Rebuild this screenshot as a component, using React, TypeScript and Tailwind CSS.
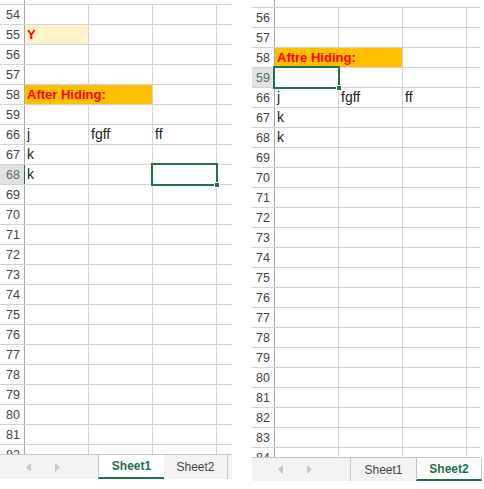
type Cell = { text?: string; fill?: string; bold?: boolean; red?: boolean; span?: number };

type SheetProps = {
  rows: number[];
  cells: Record<string, Cell>;
  selRow: number;
  selCol: number;
  topClass: string;
  gridClass: string;
  headClass: string;
  barClass: string;
  active: 1 | 2;
};

const cols = [0, 1, 2];

function Arrow({ dir }: { dir: "l" | "r" }) {
  return (
    <svg width="6" height="9" viewBox="0 0 6 9" aria-hidden>
      <polygon points={dir === "l" ? "5,0 5,9 0,4.5" : "1,0 1,9 6,4.5"} fill="#c8c8c8" />
    </svg>
  );
}

function Sheet({ rows, cells, selRow, selCol, topClass, gridClass, headClass, barClass, active }: SheetProps) {
  return (
    <div className="flex h-full flex-col">
      <div className={`${gridClass} flex flex-col overflow-hidden`}>
        <div className={`${topClass} flex shrink-0 border-b border-[#d4d4d4]`}>
          <div className={`${headClass} shrink-0 border-r border-[#a6a6a6]`} />
        </div>
        {rows.map((r) => {
          const isSel = r === selRow;
          return (
            <div key={r} className="flex h-[20px] shrink-0 border-b border-[#d4d4d4]">
              <div
                className={`${headClass} flex shrink-0 items-end justify-end border-r pb-[3px] pr-[4px] text-[12.5px] leading-none ${
                  isSel ? "border-[#217346] bg-[#e1e1e1] text-[#58705f]" : "border-[#a6a6a6] text-[#444]"
                }`}
              >
                {r}
              </div>
              {cols.map((c) => {
                const cell = cells[`${r}-${c}`];
                if (cells[`${r}-${c - 1}`]?.span === 2) return null;
                return (
                  <div
                    key={c}
                    className={`relative flex shrink-0 items-end whitespace-nowrap border-r border-[#d4d4d4] pb-[3px] pl-[2px] leading-none ${
                      cell?.span === 2 ? "w-[128px]" : "w-[64px]"
                    } ${cell?.fill ?? ""} ${cell?.bold ? "text-[13px] font-bold" : "text-[14px]"} ${
                      cell?.red ? "text-[#ff0000]" : "text-[#222]"
                    }`}
                  >
                    {cell?.text}
                    {isSel && c === selCol && (
                      <div className="absolute -left-[2px] -top-[2px] z-10 h-[23px] w-[67px] border-2 border-[#217346]">
                        <div className="absolute -bottom-[4px] -right-[4px] h-[6px] w-[6px] border border-white bg-[#217346]" />
                      </div>
                    )}
                  </div>
                );
              })}
              <div className="flex-1" />
            </div>
          );
        })}
      </div>
      <div className={`${barClass} flex shrink-0 border-t border-[#c6c6c6] bg-[#f3f3f3] text-[12px]`}>
        <div className="flex w-[98px] shrink-0 items-center gap-[22px] pl-[26px]">
          <Arrow dir="l" />
          <Arrow dir="r" />
        </div>
        <div
          className={`flex w-[66px] shrink-0 items-center justify-center border-l border-[#c6c6c6] ${
            active === 1 ? "border-b-2 border-b-[#217346] bg-white font-bold text-[#217346]" : "w-[64px] text-[#444]"
          }`}
        >
          Sheet1
        </div>
        <div
          className={`flex shrink-0 items-center justify-center border-r border-[#c6c6c6] ${
            active === 2
              ? "w-[66px] border-b-2 border-b-[#217346] border-l border-l-[#c6c6c6] bg-white font-bold text-[#217346]"
              : "w-[64px] text-[#444]"
          }`}
        >
          Sheet2
        </div>
      </div>
    </div>
  );
}

const leftRows = [54, 55, 56, 57, 58, 59, ...Array.from({ length: 17 }, (_, i) => 66 + i)];
const rightRows = [56, 57, 58, 59, ...Array.from({ length: 19 }, (_, i) => 66 + i)];

const leftCells: Record<string, Cell> = {
  "55-0": { text: "Y", fill: "bg-[#fff2cc]", bold: true, red: true },
  "58-0": { text: "After Hiding:", fill: "bg-[#ffc000]", bold: true, red: true, span: 2 },
  "66-0": { text: "j" },
  "66-1": { text: "fgff" },
  "66-2": { text: "ff" },
  "67-0": { text: "k" },
  "68-0": { text: "k" },
};

const rightCells: Record<string, Cell> = {
  "58-0": { text: "Aftre Hiding:", fill: "bg-[#ffc000]", bold: true, red: true, span: 2 },
  "66-0": { text: "j" },
  "66-1": { text: "fgff" },
  "66-2": { text: "ff" },
  "67-0": { text: "k" },
  "68-0": { text: "k" },
};

export default function App() {
  return (
    <div className="flex h-[489px] w-[484px] overflow-hidden bg-white font-['Liberation_Sans',Arial,sans-serif]">
      <div className="w-[232px] shrink-0">
        <Sheet
          rows={leftRows}
          cells={leftCells}
          selRow={68}
          selCol={2}
          topClass="h-[5px]"
          gridClass="h-[454px]"
          headClass="w-[25px]"
          barClass="h-[25px]"
          active={1}
        />
      </div>
      <div className="w-[20px] shrink-0" />
      <div className="w-[228px] shrink-0">
        <Sheet
          rows={rightRows}
          cells={rightCells}
          selRow={59}
          selCol={0}
          topClass="h-[8px]"
          gridClass="h-[457px]"
          headClass="w-[23px]"
          barClass="h-[24px]"
          active={2}
        />
      </div>
    </div>
  );
}
